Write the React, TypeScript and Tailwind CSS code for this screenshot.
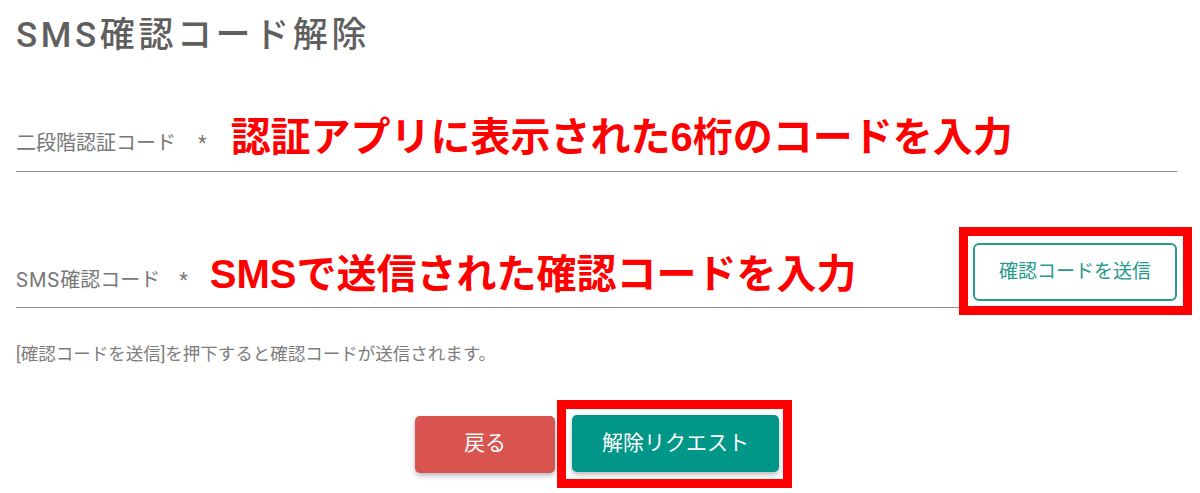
import React from "react";

export default function App() {
  return (
    <div className="w-[1200px] h-[493px] bg-white overflow-hidden pl-4 pr-[23px] font-['Roboto','Noto_Sans_CJK_JP',sans-serif]">
      <h1 className="pt-4 text-[35px] leading-[40px] font-medium tracking-[3.6px] text-[#5f5f5f]">
        SMS確認コード解除
      </h1>

      <div className="mt-[44px] h-[72px] border-b border-[#8e8e8e] flex items-end">
        <span className="pb-[14px] text-[20px] leading-[28px] text-[#777777]">
          二段階認証コード<span className="ml-[22px]">*</span>
        </span>
        <span className="ml-[24px] pb-[10px] text-[40px] leading-[48px] font-bold text-[#ff0000] font-['Liberation_Sans','Noto_Sans_CJK_JP',sans-serif]">
          認証アプリに表示された6桁のコードを入力
        </span>
      </div>

      <div className="mt-[55px] flex items-start -mr-[15px]">
        <div className="flex-1 h-[81px] border-b border-[#8e8e8e] flex items-end">
          <span className="pb-[13px] text-[20px] leading-[28px] text-[#777777]">
            <span className="tracking-[1px]">SMS</span>確認コード<span className="ml-[19px]">*</span>
          </span>
          <span className="ml-[22px] pb-[9px] text-[40px] leading-[48px] font-bold text-[#ff0000] font-['Liberation_Sans','Noto_Sans_CJK_JP',sans-serif]">
            SMSで送信された確認コードを入力
          </span>
        </div>
        <div className="border-[9px] border-[#ff0000] pl-[5px] pr-[6px] pt-[7px] pb-[5px]">
          <button className="w-[204px] h-[58px] rounded-[6px] border-2 border-[#26998b] text-[#26998b] text-[19px] bg-white">
            確認コードを送信
          </button>
        </div>
      </div>

      <p className="mt-[27px] text-[17.5px] leading-[24px] text-[#7d7d7d]">
        [確認コードを送信]を押下すると確認コードが送信されます。
      </p>

      <div className="mt-[34px] flex justify-center items-center pl-[14px] gap-[2px]">
        <button className="w-[140px] h-[57px] rounded-[5px] bg-[#d9534f] text-white text-[21px] shadow-[0_3px_5px_rgba(0,0,0,0.25)]">
          戻る
        </button>
        <div className="border-[9px] border-[#ff0000] pl-[6px] pr-[4px] pt-[6px] pb-[7px]">
          <button className="w-[207px] h-[57px] rounded-[5px] bg-[#009688] text-white text-[21px] shadow-[0_3px_5px_rgba(0,0,0,0.25)]">
            解除リクエスト
          </button>
        </div>
      </div>
    </div>
  );
}
